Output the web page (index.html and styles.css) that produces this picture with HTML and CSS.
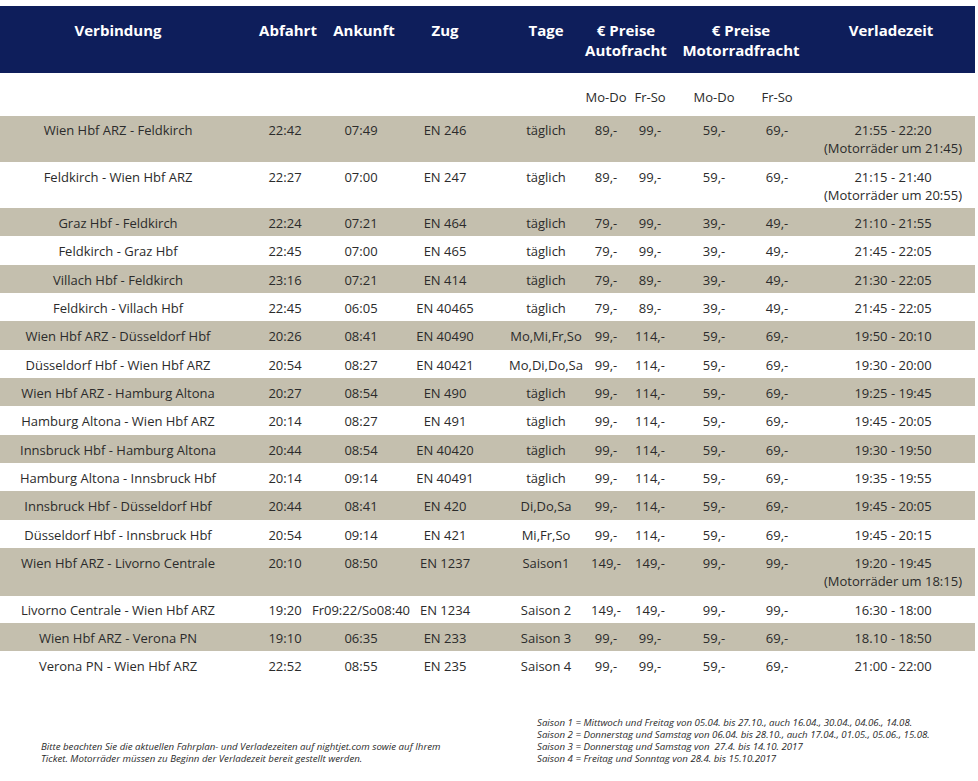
FILE: index.html
```html
<!DOCTYPE html>
<html lang="de">
<head>
<meta charset="utf-8">
<title>Nightjet Autoreisezug</title>
<link rel="stylesheet" href="styles.css">
</head>
<body>
<div class="page">
  <div class="table">
    <div class="row head">
      <div class="c">Verbindung</div>
      <div class="c shift">Abfahrt</div>
      <div class="c shift">Ankunft</div>
      <div class="c">Zug</div>
      <div class="c">Tage</div>
      <div class="c span auto">€ Preise<br>Autofracht</div>
      <div class="c span">€ Preise<br>Motorradfracht</div>
      <div class="c last">Verladezeit</div>
    </div>
    <div class="row sub">
      <div class="c"></div><div class="c"></div><div class="c"></div><div class="c"></div><div class="c"></div>
      <div class="c">Mo-Do</div><div class="c">Fr-So</div><div class="c">Mo-Do</div><div class="c">Fr-So</div>
      <div class="c last"></div>
    </div>

    <div class="row tan dbl first">
      <div class="c">Wien Hbf ARZ - Feldkirch</div><div class="c">22:42</div><div class="c">07:49</div><div class="c">EN 246</div><div class="c">täglich</div>
      <div class="c">89,-</div><div class="c">99,-</div><div class="c">59,-</div><div class="c">69,-</div>
      <div class="c last">21:55 - 22:20<br>(Motorräder um 21:45)</div>
    </div>
    <div class="row dbl">
      <div class="c">Feldkirch - Wien Hbf ARZ</div><div class="c">22:27</div><div class="c">07:00</div><div class="c">EN 247</div><div class="c">täglich</div>
      <div class="c">89,-</div><div class="c">99,-</div><div class="c">59,-</div><div class="c">69,-</div>
      <div class="c last">21:15 - 21:40<br>(Motorräder um 20:55)</div>
    </div>
    <div class="row tan">
      <div class="c">Graz Hbf - Feldkirch</div><div class="c">22:24</div><div class="c">07:21</div><div class="c">EN 464</div><div class="c">täglich</div>
      <div class="c">79,-</div><div class="c">99,-</div><div class="c">39,-</div><div class="c">49,-</div>
      <div class="c last">21:10 - 21:55</div>
    </div>
    <div class="row">
      <div class="c">Feldkirch - Graz Hbf</div><div class="c">22:45</div><div class="c">07:00</div><div class="c">EN 465</div><div class="c">täglich</div>
      <div class="c">79,-</div><div class="c">99,-</div><div class="c">39,-</div><div class="c">49,-</div>
      <div class="c last">21:45 - 22:05</div>
    </div>
    <div class="row tan">
      <div class="c">Villach Hbf - Feldkirch</div><div class="c">23:16</div><div class="c">07:21</div><div class="c">EN 414</div><div class="c">täglich</div>
      <div class="c">79,-</div><div class="c">89,-</div><div class="c">39,-</div><div class="c">49,-</div>
      <div class="c last">21:30 - 22:05</div>
    </div>
    <div class="row">
      <div class="c">Feldkirch - Villach Hbf</div><div class="c">22:45</div><div class="c">06:05</div><div class="c">EN 40465</div><div class="c">täglich</div>
      <div class="c">79,-</div><div class="c">89,-</div><div class="c">39,-</div><div class="c">49,-</div>
      <div class="c last">21:45 - 22:05</div>
    </div>
    <div class="row tan">
      <div class="c">Wien Hbf ARZ - Düsseldorf Hbf</div><div class="c">20:26</div><div class="c">08:41</div><div class="c">EN 40490</div><div class="c">Mo,Mi,Fr,So</div>
      <div class="c">99,-</div><div class="c">114,-</div><div class="c">59,-</div><div class="c">69,-</div>
      <div class="c last">19:50 - 20:10</div>
    </div>
    <div class="row">
      <div class="c">Düsseldorf Hbf - Wien Hbf ARZ</div><div class="c">20:54</div><div class="c">08:27</div><div class="c">EN 40421</div><div class="c">Mo,Di,Do,Sa</div>
      <div class="c">99,-</div><div class="c">114,-</div><div class="c">59,-</div><div class="c">69,-</div>
      <div class="c last">19:30 - 20:00</div>
    </div>
    <div class="row tan">
      <div class="c">Wien Hbf ARZ - Hamburg Altona</div><div class="c">20:27</div><div class="c">08:54</div><div class="c">EN 490</div><div class="c">täglich</div>
      <div class="c">99,-</div><div class="c">114,-</div><div class="c">59,-</div><div class="c">69,-</div>
      <div class="c last">19:25 - 19:45</div>
    </div>
    <div class="row">
      <div class="c">Hamburg Altona - Wien Hbf ARZ</div><div class="c">20:14</div><div class="c">08:27</div><div class="c">EN 491</div><div class="c">täglich</div>
      <div class="c">99,-</div><div class="c">114,-</div><div class="c">59,-</div><div class="c">69,-</div>
      <div class="c last">19:45 - 20:05</div>
    </div>
    <div class="row tan">
      <div class="c">Innsbruck Hbf - Hamburg Altona</div><div class="c">20:44</div><div class="c">08:54</div><div class="c">EN 40420</div><div class="c">täglich</div>
      <div class="c">99,-</div><div class="c">114,-</div><div class="c">59,-</div><div class="c">69,-</div>
      <div class="c last">19:30 - 19:50</div>
    </div>
    <div class="row">
      <div class="c">Hamburg Altona - Innsbruck Hbf</div><div class="c">20:14</div><div class="c">09:14</div><div class="c">EN 40491</div><div class="c">täglich</div>
      <div class="c">99,-</div><div class="c">114,-</div><div class="c">59,-</div><div class="c">69,-</div>
      <div class="c last">19:35 - 19:55</div>
    </div>
    <div class="row tan">
      <div class="c">Innsbruck Hbf - Düsseldorf Hbf</div><div class="c">20:44</div><div class="c">08:41</div><div class="c">EN 420</div><div class="c">Di,Do,Sa</div>
      <div class="c">99,-</div><div class="c">114,-</div><div class="c">59,-</div><div class="c">69,-</div>
      <div class="c last">19:45 - 20:05</div>
    </div>
    <div class="row">
      <div class="c">Düsseldorf Hbf - Innsbruck Hbf</div><div class="c">20:54</div><div class="c">09:14</div><div class="c">EN 421</div><div class="c">Mi,Fr,So</div>
      <div class="c">99,-</div><div class="c">114,-</div><div class="c">59,-</div><div class="c">69,-</div>
      <div class="c last">19:45 - 20:15</div>
    </div>
    <div class="row tan dbl tall">
      <div class="c">Wien Hbf ARZ - Livorno Centrale</div><div class="c">20:10</div><div class="c">08:50</div><div class="c">EN 1237</div><div class="c">Saison1</div>
      <div class="c">149,-</div><div class="c">149,-</div><div class="c">99,-</div><div class="c">99,-</div>
      <div class="c last">19:20 - 19:45<br>(Motorräder um 18:15)</div>
    </div>
    <div class="row short">
      <div class="c">Livorno Centrale - Wien Hbf ARZ</div><div class="c">19:20</div><div class="c">Fr09:22/So08:40</div><div class="c">EN 1234</div><div class="c">Saison 2</div>
      <div class="c">149,-</div><div class="c">149,-</div><div class="c">99,-</div><div class="c">99,-</div>
      <div class="c last">16:30 - 18:00</div>
    </div>
    <div class="row tan">
      <div class="c">Wien Hbf ARZ - Verona PN</div><div class="c">19:10</div><div class="c">06:35</div><div class="c">EN 233</div><div class="c">Saison 3</div>
      <div class="c">99,-</div><div class="c">99,-</div><div class="c">59,-</div><div class="c">69,-</div>
      <div class="c last">18.10 - 18:50</div>
    </div>
    <div class="row">
      <div class="c">Verona PN - Wien Hbf ARZ</div><div class="c">22:52</div><div class="c">08:55</div><div class="c">EN 235</div><div class="c">Saison 4</div>
      <div class="c">99,-</div><div class="c">99,-</div><div class="c">59,-</div><div class="c">69,-</div>
      <div class="c last">21:00 - 22:00</div>
    </div>
  </div>

  <div class="notes">
    <p class="note-left">Bitte beachten Sie die aktuellen Fahrplan- und Verladezeiten auf nightjet.com sowie auf Ihrem<br>Ticket. Motorräder müssen zu Beginn der Verladezeit bereit gestellt werden.</p>
    <p class="note-right">Saison 1 = Mittwoch und Freitag von 05.04. bis 27.10., auch 16.04., 30.04., 04.06., 14.08.<br>Saison 2 = Donnerstag und Samstag von 06.04. bis 28.10., auch 17.04., 01.05., 05.06., 15.08.<br>Saison 3 = Donnerstag und Samstag von&nbsp; 27.4. bis 14.10. 2017<br>Saison 4 = Freitag und Sonntag von 28.4. bis 15.10.2017</p>
  </div>
</div>
</body>
</html>
```

FILE: styles.css
```css
html, body {
  margin: 0;
  padding: 0;
  background: #ffffff;
}
body {
  font-family: "Open Sans", "Noto Sans", sans-serif;
  color: #2b2b2b;
}
.page {
  width: 978px;
  padding-top: 6px;
}
.table {
  width: 975px;
}
.row {
  display: grid;
  grid-template-columns: 236px 98px 54px 114px 88px 32px 56px 72px 54px 171px;
  font-size: 13px;
  line-height: 18px;
  height: 28.33px;
  box-sizing: border-box;
  padding-top: 6px;
}
.row.dbl { height: 46px; }
.row.first { padding-top: 5px; }
.row.tall { height: 48px; }
.row.short { height: 27px; padding-top: 5px; }
.row.tan { background: #c4bfae; }
.c {
  display: flex;
  flex-direction: column;
  align-items: center;
  text-align: center;
  white-space: nowrap;
}
.c.last { padding-left: 7px; }

.row.head {
  background: #0e1e5b;
  color: #ffffff;
  font-weight: 700;
  font-size: 15px;
  line-height: 20px;
  height: 67px;
  padding-top: 14px;
}
.row.head .span { grid-column: span 2; }
.row.head .auto { padding-right: 16px; }
.row.head .shift { padding-left: 6px; }
.row.head .last { padding-left: 3px; }

.row.sub {
  height: 43px;
  padding-top: 15px;
}

.notes {
  display: flex;
  align-items: flex-end;
  padding-top: 37px;
  font-style: italic;
  font-size: 9.7px;
  line-height: 12px;
  color: #2b2b2b;
}
.notes p { margin: 0; }
.note-left {
  margin-left: 41px !important;
  width: 496px;
}
```
